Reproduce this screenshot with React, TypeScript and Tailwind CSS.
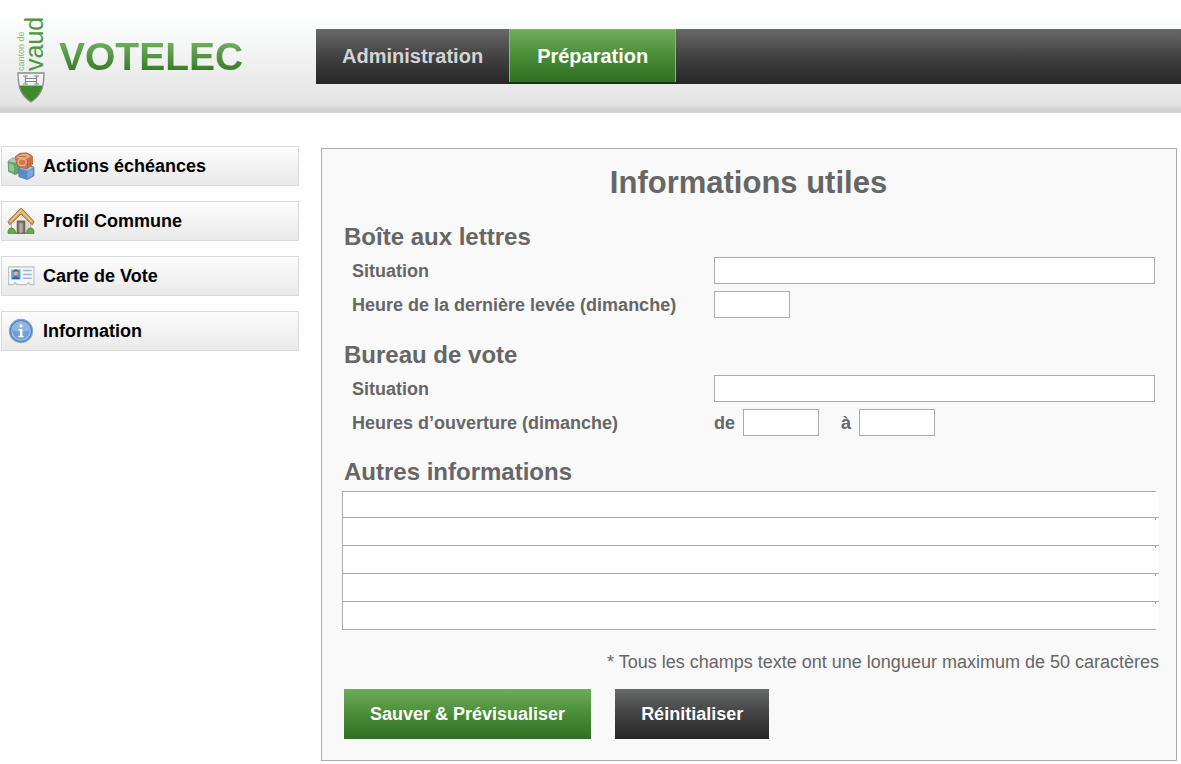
import { useState } from 'react'
import type { ReactNode } from 'react'

type MenuEntry = {
  label: string
  icon: ReactNode
}

const BlocksIcon = () => (
  <svg viewBox="0 0 26 26" className="size-7" aria-hidden="true">
    <path d="M1 8.500 5 5.500l7 1.500v12l-4.500 2L1.500 18z" fill="#68a56d" stroke="#5a8f63" strokeWidth="0.7" />
    <path d="M1 8.500 5 5.500l7 1.500-4.500 3z" fill="#a9d0a5" />
    <path d="M2 10.500 6.500 12v7l-4.500-2z" fill="#94c695" />
    <path d="m11 15 6-3 8 2v8l-6 3.500-8-2.500z" fill="#5b8bcb" stroke="#4a74ae" strokeWidth="0.7" />
    <path d="m11.500 15 5.500-2.500 7.500 2-5.500 3z" fill="#a5c4ea" />
    <path d="M19 18v6.500l5-3V15.500z" fill="#7fa8dc" />
    <path d="M7.500 4.500 12 1.200l6-.4 5.500 3 .3 7.500-5.300 4.500L10 13.500z" fill="#d27a4e" stroke="#ad6040" strokeWidth="0.8" />
    <path d="m8.500 5 4.500-3 6 .2 3 2.300-6 2.500z" fill="#eab08a" />
    <ellipse cx="14" cy="9.500" rx="3.800" ry="3.200" fill="none" stroke="#eeb592" strokeWidth="1.200" />
    <path d="M19 7v8M21.500 6v7M11 4l7 .5" stroke="#a9593a" strokeWidth="0.8" />
  </svg>
)

const HouseIcon = () => (
  <svg viewBox="0 0 26 26" className="size-7" aria-hidden="true">
    <path d="M4 13 13 4l9 9v11H4z" fill="#f1efe9" stroke="#aaa393" strokeWidth="0.8" />
    <path d="M17 12h4v10h-4z" fill="#d9d5ca" />
    <path d="M9.500 13h7v11h-7z" fill="#7d7568" stroke="#5c554a" strokeWidth="0.9" />
    <path d="M11.500 15h3v9h-3z" fill="#b5aea0" />
    <path d="M1 13.500 12.300 1.500h1.400L25 13.500l-1.500 3L13 6.500 2.500 16.500z" fill="#dfa75a" stroke="#94683a" strokeWidth="0.9" />
    <path d="M3 13.500 13 3.200 23 13.500" fill="none" stroke="#f4d090" strokeWidth="1" />
    <path d="M1 24.500c-.5-3 .8-5 3-5s4 1.800 4 5zM18 24.500c0-3 1.800-5 4-5s3.500 2 3 5z" fill="#6ca653" stroke="#47823a" strokeWidth="0.7" />
    <path d="M8 24.500h10" stroke="#7b7466" />
  </svg>
)

const CardIcon = () => (
  <svg viewBox="0 0 26 26" className="size-7" aria-hidden="true">
    <path d="M1.500 4.500h23.500V21h-3.500l-1.700-2-1.700 2H9.200L7.500 19l-1.700 2H1.500z" fill="#f4f6f8" stroke="#bcc1c5" strokeWidth="1" />
    <path d="M4 7h8.500v9H4z" fill="#5a9add" />
    <circle cx="8.200" cy="10" r="2.300" fill="#e2ad8a" />
    <path d="M5.900 10c0-4 4.700-4 4.700 0L9.400 8.500h-2z" fill="#5b4a42" />
    <path d="M4.500 16c.5-3.500 7-3.500 7.500 0z" fill="#2f66a8" />
    <path d="M15 8h8M15 11.500h8M15 15h8" stroke="#97b8d6" strokeWidth="1.400" />
  </svg>
)

const InfoIcon = () => (
  <svg viewBox="0 0 26 26" className="size-7" aria-hidden="true">
    <circle cx="13" cy="13" r="10.800" fill="#5584bb" stroke="#8aa6c8" strokeWidth="1" />
    <circle cx="13" cy="13" r="8.600" fill="#6f9fd5" stroke="#a9c9ec" strokeWidth="1" />
    <path d="M5 12a8 8 0 0 1 16 0c-5 2-11 2-16 0z" fill="#8db6e4" />
    <circle cx="13" cy="8.200" r="1.500" fill="#fff" />
    <path d="M11 11.200h3.300v6.300h1.200v1.300h-5v-1.300h1.500v-5H11z" fill="#fff" />
  </svg>
)

const Logo = () => (
  <svg viewBox="0 0 36 92" className="h-[92px] w-9 overflow-visible" role="img" aria-label="Canton de Vaud">
    <g fontFamily="'Liberation Sans', Arial, sans-serif">
      <text transform="translate(9 59)rotate(-90)" fontSize="9" fill="#8bba78">canton de</text>
      <text transform="translate(28 59)rotate(-90)" fontSize="25" fill="#4b9840">vaud</text>
    </g>
    <path d="M3 61h26c0 12-2 22-13 29C5 83 3 73 3 61z" fill="#f1f2f1" />
    <path d="M3.800 73.500h24.400C27 80 23.500 85.500 16 90 8.500 85.500 5 80 3.800 73.500z" fill="#3f8b2c" />
    <path d="M3 61h26c0 12-2 22-13 29C5 83 3 73 3 61z" fill="none" stroke="#898d89" strokeWidth="1.300" />
    <path d="M8 64h5M19 64h5M10.500 64v8M21.500 64v8M8 72h5M19 72h5M11 66.500h10M11 69.500h10" stroke="#858985" strokeWidth="1" />
  </svg>
)

const menu: MenuEntry[] = [
  { label: 'Actions échéances', icon: <BlocksIcon /> },
  { label: 'Profil Commune', icon: <HouseIcon /> },
  { label: 'Carte de Vote', icon: <CardIcon /> },
  { label: 'Information', icon: <InfoIcon /> },
]

const field = 'h-[27px] border border-[#a9abab] bg-white px-1 text-base outline-none'
const row = 'flex h-[27px] items-center'
const green = 'bg-linear-to-b from-[#6fac5d] via-[#4a8d36] to-[#2f6f22]'
const dark = 'bg-linear-to-b from-[#696a6a] via-[#424242] to-[#262626]'

export default function App() {
  const [lines, setLines] = useState(['', '', '', '', ''])

  const update_line = (index: number, value: string) => {
    setLines(lines.map((line, i) => (i === index ? value : line)))
  }

  return (
    <div className="font-['Liberation_Sans',Arial,sans-serif] text-lg text-[#666]">
      <header className="flex h-[113px] bg-[linear-gradient(to_bottom,#fff_0%,#fdfefe_15%,#e4e4e4_92%,#d0d0d0_98%,#d4d4d4_100%)]">
        <div className="flex w-[316px] shrink-0 gap-2 pt-3 pl-[15px]">
          <Logo />
          <div className="mt-5 h-12 bg-linear-to-b from-[#6fb05e] from-20% to-[#2f7420] to-90% bg-clip-text text-[39px] leading-[50px] font-bold text-transparent">
            VOTELEC
          </div>
        </div>
        <nav className={`mt-[29px] flex h-[55px] flex-1 text-xl font-bold ${dark}`}>
          <a href="#administration" className="px-[26px] pt-[13px] text-[#d4d4d4]">Administration</a>
          <a
            href="#preparation"
            aria-current="page"
            className={`mb-0.5 border border-b-0 border-[#86bb76] px-[27px] pt-3 text-white ${green}`}
          >
            Préparation
          </a>
        </nav>
      </header>

      <div className="flex items-start gap-[22px] pr-1 pl-px">
        <nav className="mt-[33px] flex w-[298px] shrink-0 flex-col gap-[15px]">
          {menu.map(entry => (
            <a
              key={entry.label}
              href="#"
              className="flex h-10 items-center gap-2 border border-[#dadada] bg-linear-to-b from-[#fdfdfd] to-[#e9e9e9] pl-[5px] font-bold text-black"
            >
              {entry.icon}
              {entry.label}
            </a>
          ))}
        </nav>

        <main className="mt-[35px] flex-1 border border-[#a9abab] bg-[#f9f9f9] pt-4 pr-[17px] pb-[21px] pl-5">
          <h1 className="pr-1 text-center text-[31px] leading-[36px] font-bold">Informations utiles</h1>

          <form onSubmit={e => e.preventDefault()}>
            <section className="mt-5 pr-1 pl-[2px]">
              <h2 className="text-2xl leading-8 font-bold">Boîte aux lettres</h2>
              <div className="mt-1 flex flex-col gap-[7px] pl-2 font-bold">
                <div className={row}>
                  <label htmlFor="box_place" className="w-[362px]">Situation</label>
                  <input id="box_place" maxLength={50} className={`flex-1 ${field}`} />
                </div>
                <div className={row}>
                  <label htmlFor="box_time" className="w-[362px]">Heure de la dernière levée (dimanche)</label>
                  <input id="box_time" className={`w-[76px] ${field}`} />
                </div>
              </div>
            </section>

            <section className="mt-[21px] pr-1 pl-[2px]">
              <h2 className="text-2xl leading-8 font-bold">Bureau de vote</h2>
              <div className="mt-1 flex flex-col gap-[7px] pl-2 font-bold">
                <div className={row}>
                  <label htmlFor="office_place" className="w-[362px]">Situation</label>
                  <input id="office_place" maxLength={50} className={`flex-1 ${field}`} />
                </div>
                <div className={row}>
                  <span className="w-[362px]">Heures d’ouverture (dimanche)</span>
                  <label htmlFor="office_from" className="mr-2">de</label>
                  <input id="office_from" className={`w-[76px] ${field}`} />
                  <label htmlFor="office_to" className="mr-2 ml-[22px]">à</label>
                  <input id="office_to" className={`w-[76px] ${field}`} />
                </div>
              </div>
            </section>

            <section className="mt-5">
              <h2 className="pl-[2px] text-2xl leading-8 font-bold">Autres informations</h2>
              <div className="mt-[3px] mr-[3px] border-t border-[#a9abab]" />
              <div className="border-l border-[#a9abab] bg-white">
                {lines.map((line, i) => (
                  <div
                    key={i}
                    className="relative h-7 border-t border-[#a9abab] first:h-[25px] first:border-t-0 not-first:after:absolute not-first:after:top-0 not-first:after:right-[3px] not-first:after:h-0.5 not-first:after:w-px not-first:after:bg-[#a9abab]"
                  >
                    <input
                      aria-label={`Autres informations, ligne ${i + 1}`}
                      maxLength={50}
                      value={line}
                      onChange={e => update_line(i, e.target.value)}
                      className="block h-full w-full px-1 text-base outline-none"
                    />
                  </div>
                ))}
              </div>
              <div className="mr-[3px] border-t border-[#a9abab]" />
              <p className="mt-[18px] text-right">* Tous les champs texte ont une longueur maximum de 50 caractères</p>
            </section>

            <div className="mt-[13px] flex gap-6 pl-[2px] font-bold text-white">
              <button type="submit" className={`h-[50px] px-[26px] ${green}`}>Sauver &amp; Prévisualiser</button>
              <button type="reset" onClick={() => setLines(['', '', '', '', ''])} className={`h-[50px] px-[26px] ${dark}`}>
                Réinitialiser
              </button>
            </div>
          </form>
        </main>
      </div>
    </div>
  )
}
